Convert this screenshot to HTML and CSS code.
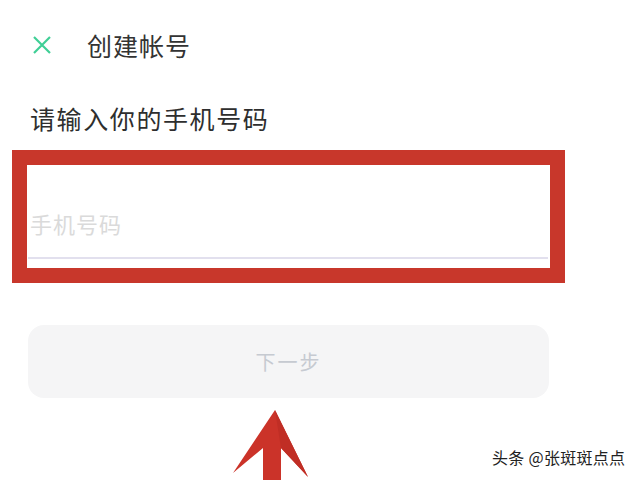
FILE: index.html
```html
<!DOCTYPE html>
<html lang="zh-CN">
<head>
  <meta charset="UTF-8">
  <title>创建帐号</title>
  <link rel="stylesheet" href="styles.css">
</head>
<body>
  <div class="page">
    <header class="topbar">
      <svg class="close" viewBox="0 0 20 20" width="20" height="20">
        <path d="M2 2 L18 18 M18 2 L2 18" stroke="#3fcf96" stroke-width="2.2" fill="none"/>
      </svg>
      <span class="title">创建帐号</span>
    </header>

    <h1 class="heading">请输入你的手机号码</h1>

    <div class="mark">
      <div class="field">
        <span class="placeholder">手机号码</span>
        <div class="line"></div>
      </div>
    </div>

    <button class="next">下一步</button>

    <!-- annotation arrow -->
    <svg class="arrow" viewBox="0 0 82 75" width="82" height="75">
      <path d="M45 2 L78 69 L51 40 L51 75 L33 75 L33 40 L3 65 Z" fill="#cb3329"/>
      <path d="M45 2 L78 69 L51 40 Z" fill="#c02e25"/>
    </svg>

    <div class="watermark">头条 @张斑斑点点</div>
  </div>
</body>
</html>
```

FILE: styles.css
```css
* {
  box-sizing: border-box;
}
body {
  margin: 0;
  background: #fff;
  font-family: "Noto Sans CJK SC", "Noto Sans", sans-serif;
  color: #333;
}
.page {
  position: relative;
  width: 640px;
  height: 480px;
  overflow: hidden;
}
.topbar {
  display: flex;
  align-items: center;
  height: 30px;
  margin-top: 30px;
  padding-left: 32px;
}
.close {
  flex: none;
}
.title {
  margin-left: 35px;
  font-size: 25px;
  line-height: 30px;
  letter-spacing: 1px;
  color: #333;
}
.heading {
  margin: 43px 0 0 30px;
  font-size: 25px;
  line-height: 30px;
  font-weight: normal;
  color: #2e2e2e;
  letter-spacing: 1.6px;
}
.mark {
  width: 553px;
  margin: 17px 0 0 12px;
  border: 15px solid #c8372b;
  background: #fff;
}
.field {
  padding: 44px 2px 9px 1px;
}
.placeholder {
  display: block;
  padding-left: 2px;
  font-size: 22px;
  line-height: 28px;
  letter-spacing: 1px;
  color: #dadada;
}
.line {
  height: 2px;
  margin-top: 20px;
  background: #e2e0ee;
}
.next {
  display: block;
  width: 521px;
  height: 73px;
  margin: 42px 0 0 28px;
  border: none;
  border-radius: 16px;
  background: #f5f5f6;
  font-family: inherit;
  font-size: 20px;
  color: #c6cad1;
  letter-spacing: 2px;
}
.arrow {
  position: absolute;
  left: 230px;
  top: 408px;
}
.watermark {
  position: absolute;
  left: 492px;
  top: 446px;
  font-size: 16px;
  line-height: 22px;
  letter-spacing: 0.3px;
  color: #222;
  text-shadow: 0 0 2px #fff, 0 0 2px #fff;
}
```
